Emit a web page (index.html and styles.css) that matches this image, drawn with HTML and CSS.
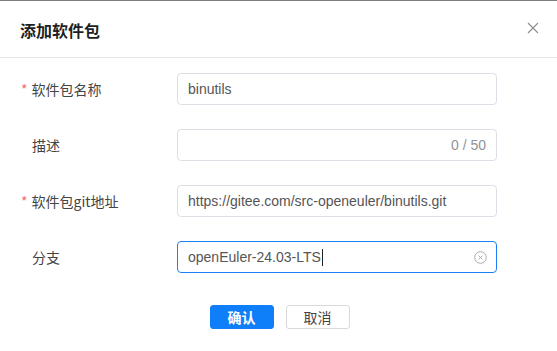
FILE: index.html
```html
<!DOCTYPE html>
<html lang="zh-CN">
<head>
    <meta charset="UTF-8">
    <meta name="viewport" content="width=device-width, initial-scale=1.0">
    <title>添加软件包</title>
    <link rel="stylesheet" href="styles.css">
</head>
<body>
    <div class="dialog">
        <div class="dialog-header">
            <h2 class="dialog-title">添加软件包</h2>
            <span class="close">
                <svg width="12" height="12" viewBox="0 0 12 12">
                    <path d="M1 1L11 11M11 1L1 11" stroke="#8c8c8c" stroke-width="1.1" fill="none"/>
                </svg>
            </span>
        </div>

        <div class="dialog-body">
            <div class="form-row">
                <label class="form-label"><span class="star">*</span>软件包名称</label>
                <div class="field"><span class="value">binutils</span></div>
            </div>
            <div class="form-row">
                <label class="form-label plain">描述</label>
                <div class="field"><span class="value"></span><span class="count">0 / 50</span></div>
            </div>
            <div class="form-row">
                <label class="form-label"><span class="star">*</span>软件包git地址</label>
                <div class="field"><span class="value">https://gitee.com/src-openeuler/binutils.git</span></div>
            </div>
            <div class="form-row">
                <label class="form-label plain">分支</label>
                <div class="field focused">
                    <span class="value">openEuler-24.03-LTS<span class="caret"></span></span>
                    <span class="clear">
                        <svg width="13" height="13" viewBox="0 0 13 13">
                            <circle cx="6.5" cy="6.5" r="5.8" stroke="#a8abb2" stroke-width="1" fill="none"/>
                            <path d="M4.7 4.7L8.3 8.3M8.3 4.7L4.7 8.3" stroke="#a8abb2" stroke-width="1" fill="none"/>
                        </svg>
                    </span>
                </div>
            </div>
        </div>

        <div class="dialog-footer">
            <button class="btn btn-primary">确认</button>
            <button class="btn">取消</button>
        </div>
    </div>
</body>
</html>
```

FILE: styles.css
```css
body {
    margin: 0;
    background: #ffffff;
    font-family: "Liberation Sans", "Noto Sans CJK SC", Arial, sans-serif;
    font-size: 14px;
    color: #333333;
}
.dialog {
    width: 557px;
    height: 350px;
    border-top: 1px solid #7d7d7d;
}
.dialog-header {
    height: 56px;
    display: flex;
    align-items: center;
    justify-content: space-between;
    padding: 0 18px 0 20px;
    border-bottom: 1px solid #e6e6e6;
    box-sizing: border-box;
    height: 57px;
}
.dialog-title {
    margin: 0;
    font-size: 16px;
    font-weight: bold;
    color: #1f1f1f;
    font-family: "Noto Sans CJK SC", sans-serif;
    padding-top: 2px;
}
.close {
    display: flex;
    width: 12px;
    height: 12px;
    margin-top: -2px;
}
.dialog-body {
    padding: 15px 0 0 20px;
    display: flex;
    flex-direction: column;
    gap: 24px;
}
.form-row {
    display: flex;
    align-items: center;
    height: 32px;
}
.form-label {
    width: 157px;
    font-family: "Noto Sans CJK SC", sans-serif;
    color: #444444;
    font-size: 14px;
}
.form-label.plain {
    padding-left: 12px;
    box-sizing: border-box;
}
.star {
    color: #f56c6c;
    margin-right: 4px;
    margin-left: 1px;
}
.field {
    width: 320px;
    height: 32px;
    box-sizing: border-box;
    border: 1px solid #dcdfe6;
    border-radius: 4px;
    display: flex;
    align-items: center;
    padding: 0 10px;
    color: #555555;
}
.field.focused {
    border-color: #1e80f5;
}
.value {
    flex: 1;
    display: flex;
    align-items: center;
}
.caret {
    display: inline-block;
    width: 1px;
    height: 17px;
    background: #222222;
    margin-left: 1px;
}
.count {
    color: #909399;
    font-size: 14px;
}
.clear {
    display: flex;
    margin-right: -1px;
}
.dialog-footer {
    display: flex;
    justify-content: center;
    gap: 12px;
    padding-top: 32px;
    padding-left: 2px;
}
.btn {
    width: 64px;
    height: 24px;
    box-sizing: border-box;
    border: 1px solid #d9d9d9;
    border-radius: 3px;
    background: #ffffff;
    color: #444444;
    font-family: "Noto Sans CJK SC", sans-serif;
    font-size: 14px;
    padding: 0;
    line-height: 22px;
}
.btn-primary {
    background: #0f7ff9;
    border-color: #0f7ff9;
    color: #ffffff;
    font-weight: bold;
}
```
